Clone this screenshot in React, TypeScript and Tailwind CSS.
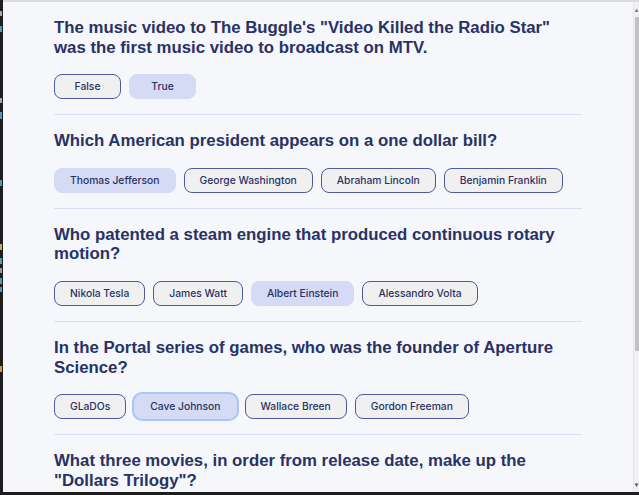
import { FC } from 'react'

interface Question {
  question: string
  answers: string[]
  selected: number
  focused?: boolean
}

const questions: Question[] = [
  {
    question: 'The music video to The Buggle\'s "Video Killed the Radio Star" was the first music video to broadcast on MTV.',
    answers: ['False', 'True'],
    selected: 1,
  },
  {
    question: 'Which American president appears on a one dollar bill?',
    answers: ['Thomas Jefferson', 'George Washington', 'Abraham Lincoln', 'Benjamin Franklin'],
    selected: 0,
  },
  {
    question: 'Who patented a steam engine that produced continuous rotary motion?',
    answers: ['Nikola Tesla', 'James Watt', 'Albert Einstein', 'Alessandro Volta'],
    selected: 2,
  },
  {
    question: 'In the Portal series of games, who was the founder of Aperture Science?',
    answers: ['GLaDOs', 'Cave Johnson', 'Wallace Breen', 'Gordon Freeman'],
    selected: 1,
    focused: true,
  },
  {
    question: 'What three movies, in order from release date, make up the "Dollars Trilogy"?',
    answers: [
      'A Fistful of Dollars, For a Few Dollars More, The Good, the Bad, and the Ugly',
      'The Good, the Bad, and the Ugly, For a Few Dollars More, A Fistful of Dollars',
    ],
    selected: -1,
  },
]

// bits of editor text peeking out at the left edge
const codeMarks = [
  { gap: 11, color: '#a8a8a8', h: 5 },
  { gap: 10, color: '#5f93b5', h: 6 },
  { gap: 66, color: '#a8a8a8', h: 5 },
  { gap: 9, color: '#5f93b5', h: 7 },
  { gap: 61, color: '#5f93b5', h: 6 },
  { gap: 58, color: '#bfa86a', h: 6 },
  { gap: 8, color: '#5f93b5', h: 6 },
  { gap: 4, color: '#9a9a9a', h: 5 },
  { gap: 5, color: '#5f93b5', h: 6 },
  { gap: 3, color: '#5f93b5', h: 5 },
  { gap: 74, color: '#c49a50', h: 6 },
]

const AnswerButton: FC<{ label: string; selected: boolean; focused?: boolean }> = ({ label, selected, focused }) => {
  return (
    <button
      className={
        selected
          ? focused
            ? 'h-[25px] min-w-[67px] px-[15px] rounded-lg bg-[#d6dbf5] border border-[#d6dbf5] text-[10.3px] font-medium text-[#293264] ring-2 ring-[#a9c6fa]'
            : 'h-[25px] min-w-[67px] px-[15px] rounded-lg bg-[#d6dbf5] border border-[#d6dbf5] text-[10.3px] font-medium text-[#293264]'
          : 'h-[25px] min-w-[67px] px-[15px] rounded-lg bg-[#f0f0f1] border border-[#4d5b9e] text-[10.3px] font-medium text-[#293264]'
      }
      style={{ fontFamily: 'Inter, "Noto Sans", sans-serif' }}
    >
      {label}
    </button>
  )
}

export default function App() {
  return (
    <div className="w-[639px] h-[495px] flex flex-col bg-[#1e1e1e] overflow-hidden">
      <div className="flex flex-1 min-h-0">
        <div className="w-[3px] flex flex-col shrink-0">
          {codeMarks.map((m, i) => (
            <div key={i} className="w-[2px]" style={{ marginTop: m.gap, height: m.h, backgroundColor: m.color }} />
          ))}
        </div>
        <div className="flex-1 flex flex-col min-w-0 border-t-2 border-[#dcdcdc]">
          <div className="flex flex-1 min-h-0">
            <main className="flex-1 bg-[#f5f7fb] overflow-hidden">
              <div className="w-[528px] mx-auto">
                {questions.map((q, qi) => (
                  <section key={qi} className="pt-[16px] pb-[15px] border-b border-[#dbdef0]">
                    <h2
                      className="text-[16.8px] leading-[19.6px] font-bold text-[#293264]"
                      style={{ fontFamily: '"Liberation Sans", Arial, sans-serif' }}
                    >
                      {q.question}
                    </h2>
                    <div className="flex flex-wrap gap-2 mt-[17px]">
                      {q.answers.map((a, ai) => (
                        <AnswerButton key={ai} label={a} selected={ai === q.selected} focused={q.focused} />
                      ))}
                    </div>
                  </section>
                ))}
              </div>
            </main>
            <div className="w-[6px] bg-[#f1f1f1] flex flex-col border-l border-[#e6e6e6]">
              <div className="h-[15px] flex items-center justify-center text-[6px] leading-none text-[#7a7a7a]">▲</div>
              <div className="h-[334px] ml-[1px] bg-[#c1c1c1]" />
              <div className="flex-1" />
              <div className="h-[15px] flex items-center justify-center text-[6px] leading-none text-[#505050]">▼</div>
            </div>
          </div>
        </div>
      </div>
      <div className="h-[3px] bg-[#1e1e1e]" />
    </div>
  )
}
